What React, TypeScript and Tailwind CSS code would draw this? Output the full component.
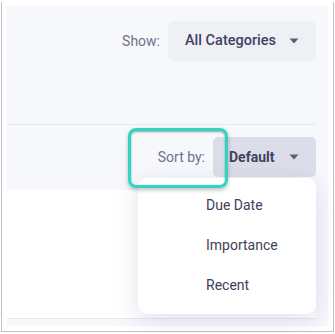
import React from "react";

function Caret() {
  return (
    <svg width="10" height="6" viewBox="0 0 10 6" className="block">
      <path d="M0.5 0.5 L9.5 0.5 L5 5.5 Z" fill="#5b5e78" />
    </svg>
  );
}

export default function App() {
  const font = { fontFamily: "Roboto, 'Noto Sans', sans-serif" };
  return (
    <div className="w-[335px] h-[334px] bg-white pl-[1px] pt-[2px]" style={font}>
      <div className="w-[333px] h-[330px] border-l border-r border-b border-[#c2c2c6] pl-[5px] pt-[4px] pr-[5px]">
        <div className="w-[321px] h-[320px] bg-[#f7f8fc] pr-[12px]">
          <div className="relative w-[309px] h-[320px] flex flex-col">
            {/* Show row */}
            <div className="h-[118px] flex justify-end items-start pt-[15px]">
              <div className="flex items-center gap-[8px]">
                <span className="text-[14px] text-[#6f7288]">Show:</span>
                <button className="w-[148px] h-[40px] rounded-[5px] bg-[#eef0f6] flex items-center justify-between pl-[17px] pr-[17px]">
                  <span className="text-[14.5px] font-medium text-[#3f4260]">All Categories</span>
                  <Caret />
                </button>
              </div>
            </div>
            <div className="h-[1px] bg-[#e8e9f0]" />
            {/* Sort row */}
            <div className="h-[65px] flex justify-end items-start pt-[12px]">
              <div className="flex items-center gap-[8px]">
                <span className="text-[14px] text-[#6f7288]">Sort by:</span>
                <button className="w-[103px] h-[40px] rounded-[5px] bg-[#dcdde8] flex items-center justify-between pl-[16px] pr-[17px]">
                  <span className="text-[14px] font-bold text-[#3f4260]">Default</span>
                  <Caret />
                </button>
              </div>
            </div>
            <div className="h-[128px] bg-white" />
            <div className="h-[1px] bg-[#e6e7ef]" />

            {/* Dropdown menu */}
            <div className="absolute left-[131px] top-[172px] w-[178px] h-[136px] bg-white rounded-[9px] shadow-[0_6px_22px_rgba(120,125,170,0.22)] flex flex-col pt-[7px]">
              {["Due Date", "Importance", "Recent"].map((t) => (
                <div key={t} className="h-[40px] flex items-center pl-[68px] text-[14px] text-[#3f4158]">
                  {t}
                </div>
              ))}
            </div>

            {/* Highlight annotation */}
            <div className="absolute left-[121px] top-[122px] w-[100px] h-[60px] rounded-[8px] border-[3px] border-[#2ed6c0] shadow-[0_2px_4px_rgba(0,0,0,0.25),inset_0_1px_2px_rgba(60,60,60,0.5)]" />
          </div>
        </div>
      </div>
    </div>
  );
}
